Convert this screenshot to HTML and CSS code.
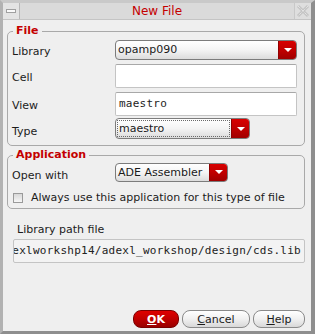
FILE: index.html
```html
<!DOCTYPE html>
<html lang="en">
<head>
    <meta charset="UTF-8">
    <title>New File</title>
    <link rel="stylesheet" href="styles.css">
</head>
<body>
    <div class="window">
        <div class="titlebar">
            <div class="tb-btn tb-min"><span class="min-glyph"></span></div>
            <div class="title">New File</div>
            <div class="tb-btn tb-close">
                <svg width="14" height="14" viewBox="0 0 14 14">
                    <path d="M2 2 L12 12 M12 2 L2 12" stroke="#c4c4c4" stroke-width="3" fill="none"/>
                    <path d="M2 2 L12 12 M12 2 L2 12" stroke="#f2f2f2" stroke-width="1" stroke-dasharray="1 1" fill="none"/>
                </svg>
            </div>
        </div>

        <div class="content">
            <fieldset class="group group-file">
                <legend>File</legend>
                <div class="form-grid">
                    <label class="lbl lbl-library">Library</label>
                    <div class="combo combo-library">
                        <span class="combo-text">opamp090</span>
                        <span class="combo-arrow"><span class="tri"></span></span>
                    </div>

                    <label class="lbl lbl-cell">Cell</label>
                    <div class="field"></div>

                    <label class="lbl lbl-view">View</label>
                    <div class="field mono">maestro</div>

                    <label class="lbl lbl-type">Type</label>
                    <div class="combo combo-type">
                        <span class="combo-text"><span class="focus">maestro</span></span>
                        <span class="combo-arrow"><span class="tri"></span></span>
                    </div>
                </div>
            </fieldset>

            <fieldset class="group group-app">
                <legend>Application</legend>
                <div class="form-grid">
                    <label class="lbl lbl-open">Open with</label>
                    <div class="combo combo-app">
                        <span class="combo-text">ADE Assembler</span>
                        <span class="combo-arrow"><span class="tri"></span></span>
                    </div>
                </div>
                <div class="check-row">
                    <span class="checkbox"></span>
                    <span>Always use this application for this type of file</span>
                </div>
            </fieldset>

            <div class="path-label">Library path file</div>
            <div class="path-field mono"><span>exlworkshp14/adexl_workshop/design/cds.lib</span></div>

            <div class="buttons">
                <button class="btn btn-ok"><u>O</u>K</button>
                <button class="btn btn-cancel"><u>C</u>ancel</button>
                <button class="btn btn-help"><u>H</u>elp</button>
            </div>
        </div>
    </div>
</body>
</html>
```
FILE: styles.css
```css
body {
    margin: 0;
    font-family: 'DejaVu Sans', sans-serif;
    font-size: 11px;
    color: #1c1c1c;
    background-color: #efefef;
}

.window {
    width: 315px;
    height: 334px;
    box-sizing: border-box;
    border-top: 3px solid #c9c9c9;
    border-left: 3px solid #b2b2b2;
    border-right: 4px solid #8e8e8e;
    border-bottom: 3px solid #8e8e8e;
    background-color: #efefef;
    display: flex;
    flex-direction: column;
}

/* title bar */
.titlebar {
    height: 17px;
    display: flex;
    background-color: #dadada;
    border-bottom: 1px solid #c4c4c4;
    box-sizing: border-box;
}

.tb-btn {
    width: 16px;
    display: flex;
    align-items: center;
    justify-content: center;
    background-color: #e4e4e4;
}

.tb-min {
    border-right: 1px solid #b8b8b8;
}

.min-glyph {
    width: 8px;
    height: 2px;
    background-color: #fafafa;
    border: 1px solid #a0a0a0;
}

.tb-close {
    border-left: 1px solid #c8c8c8;
    background-color: #dedede;
}

.title {
    flex: 1;
    text-align: center;
    color: #c40000;
    font-size: 12px;
    line-height: 17px;
}

.content {
    flex: 1;
    display: flex;
    flex-direction: column;
    padding: 4px 6px 0 4px;
}

/* group boxes */
.group {
    margin: 0;
    border: 1px solid #a9a9a9;
    border-radius: 5px;
    padding: 2px 7px 6px 4px;
}

.group legend {
    color: #c40000;
    font-weight: bold;
    font-size: 11px;
    line-height: 14px;
    padding: 0 3px;
    margin-left: 1px;
}

.group-app {
    margin-top: 2px;
    padding-top: 0;
    padding-bottom: 4px;
}

.form-grid {
    display: grid;
    grid-template-columns: 103px 1fr;
    align-items: center;
}

.lbl {
    line-height: 13px;
    padding-top: 3px;
}

.lbl-cell,
.lbl-view {
    margin-top: 4px;
}

.lbl-type {
    margin-top: 2px;
    padding-top: 5px;
}

.lbl-open {
    padding-top: 7px;
}

/* combo boxes */
.combo {
    height: 20px;
    box-sizing: border-box;
    display: flex;
    border: 1px solid #7c7c7c;
    border-radius: 4px;
    background: linear-gradient(#ffffff, #f4f4f4 50%, #dcdcdc);
    overflow: hidden;
}

.combo-text {
    flex: 1;
    line-height: 18px;
    padding-left: 2px;
    display: flex;
    color: #1a1a1a;
}

.combo-arrow {
    width: 17px;
    display: flex;
    align-items: center;
    justify-content: center;
    background: linear-gradient(#d80000, #c00000 50%, #a00000);
    border-left: 1px solid #900000;
}

.tri {
    width: 0;
    height: 0;
    border-left: 4px solid transparent;
    border-right: 4px solid transparent;
    border-top: 4px solid #ffffff;
}

.combo-type {
    width: 135px;
    height: 21px;
    margin-top: 2px;
}

.focus {
    flex: 1;
    margin: 1px 1px 1px -1px;
    padding-left: 1px;
    line-height: 15px;
    border: 1px dotted #6a6a6a;
}

.combo-app {
    width: 113px;
    height: 19px;
}

.combo-app .combo-text {
    line-height: 17px;
}

/* text fields */
.field {
    height: 24px;
    box-sizing: border-box;
    margin-top: 4px;
    background-color: #ffffff;
    border: 1px solid #c4c4c4;
    border-top-color: #a8a8a8;
    border-radius: 2px;
    padding-left: 3px;
    line-height: 22px;
}

.mono {
    font-family: 'DejaVu Sans Mono', monospace;
    font-size: 11px;
    letter-spacing: 0.25px;
}

.check-row {
    display: flex;
    align-items: center;
    gap: 8px;
    margin-top: 9px;
    padding-left: 1px;
}

.checkbox {
    width: 10px;
    height: 10px;
    box-sizing: border-box;
    border: 1px solid #9a9a9a;
    background: linear-gradient(#d8d8d8, #f6f6f6);
}

.path-label {
    margin-top: 14px;
    padding-left: 10px;
    line-height: 13px;
}

.path-field {
    margin: 3px 0 0 6px;
    height: 24px;
    box-sizing: border-box;
    border: 1px solid #c4c4c4;
    border-radius: 2px;
    background-color: #f3f3f3;
    color: #222222;
    line-height: 22px;
    padding: 0 3px 0 1px;
    white-space: nowrap;
    overflow: hidden;
    display: flex;
    justify-content: flex-end;
}

/* dialog buttons */
.buttons {
    margin-top: auto;
    display: flex;
    justify-content: flex-end;
    gap: 3px;
    padding-bottom: 3px;
}

.btn {
    height: 18px;
    padding: 0;
    font-family: 'DejaVu Sans', sans-serif;
    font-size: 11px;
    color: #1c1c1c;
    border: 1px solid #8a8a8a;
    border-radius: 8px;
    background: linear-gradient(#ffffff, #f0f0f0 50%, #d8d8d8);
}

.btn-ok {
    width: 46px;
    color: #ffffff;
    font-weight: bold;
    border-color: #7a0000;
    background: linear-gradient(#e00000, #c00000 50%, #980000);
}

.btn-cancel {
    width: 68px;
}

.btn-help {
    width: 52px;
}
```
